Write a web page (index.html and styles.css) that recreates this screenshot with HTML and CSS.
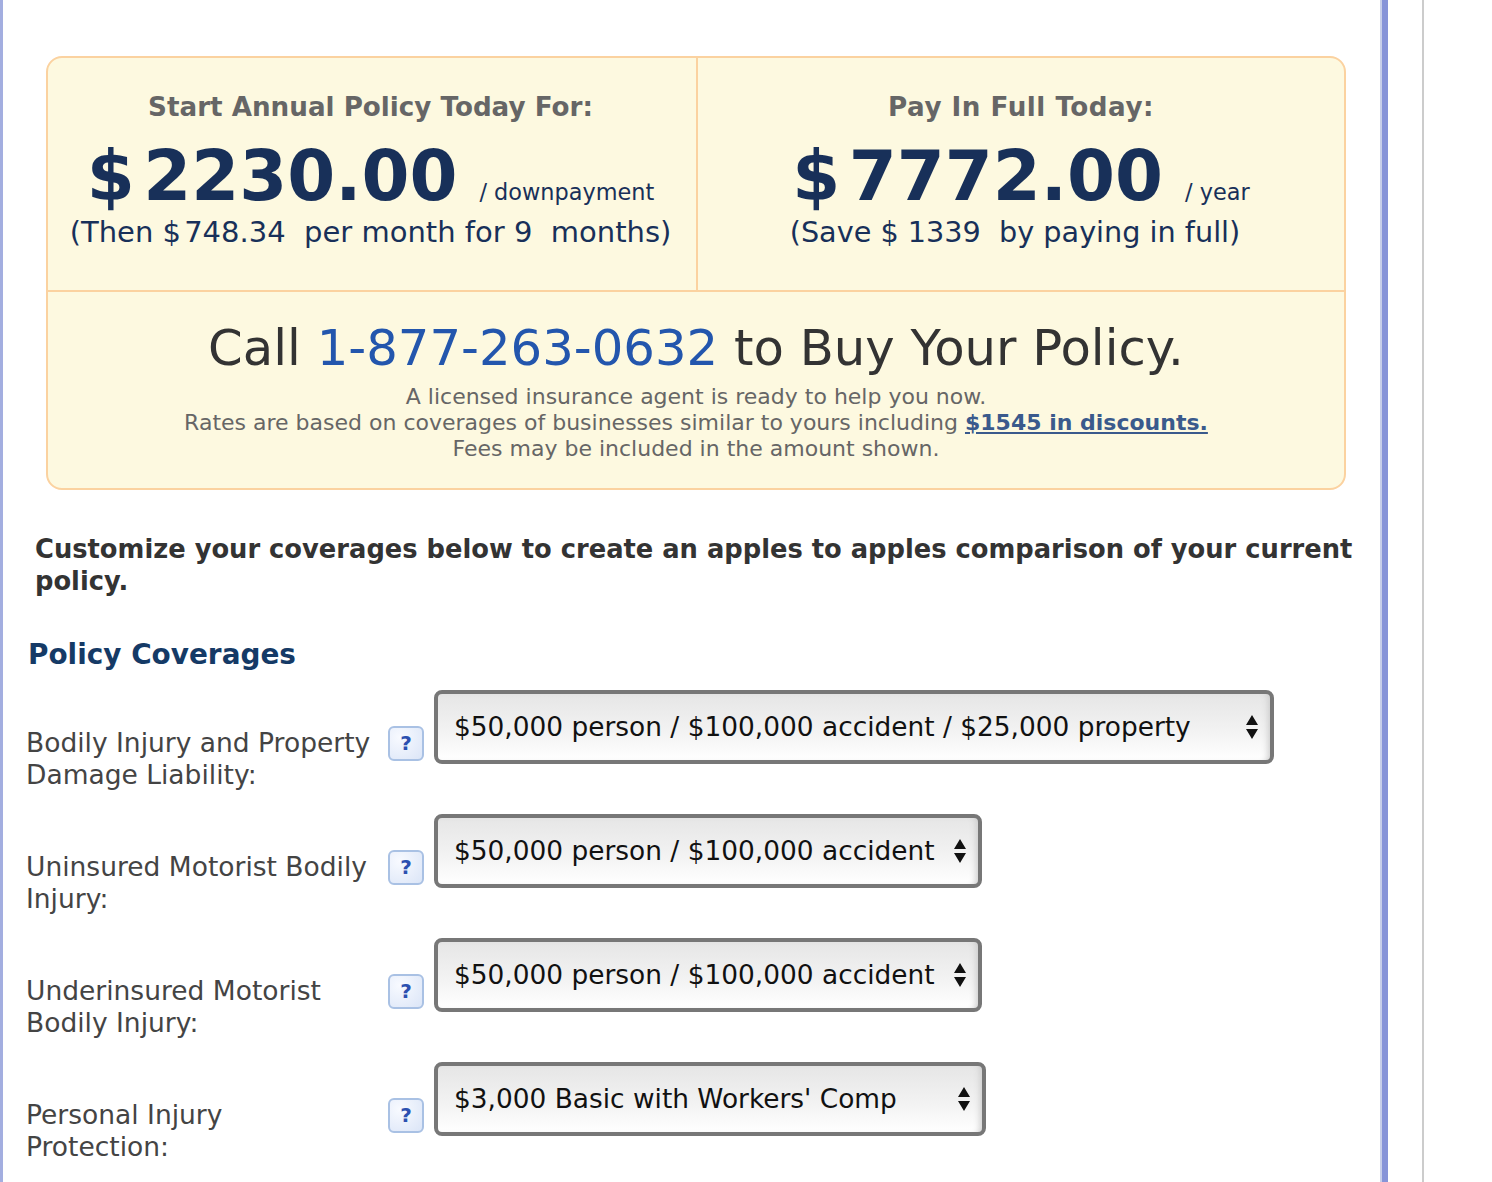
FILE: index.html
```html
<!DOCTYPE html>
<html lang="en">
<head>
    <meta charset="UTF-8">
    <title>Policy Quote</title>
    <link rel="stylesheet" href="styles.css">
</head>
<body>
    <div class="page">
        <div class="main">

            <!-- Quote box -->
            <div class="quote-box">
                <div class="price-row">
                    <div class="price-cell">
                        <h3 class="price-title">Start Annual Policy Today For:</h3>
                        <p class="price"><span class="amount">$<span class="thin"> </span>2230.00</span><span class="per">/ downpayment</span></p>
                        <p class="price-note">(Then $<span class="thin-note"> </span>748.34&nbsp; per month for 9&nbsp; months)</p>
                    </div>
                    <div class="price-cell">
                        <h3 class="price-title pay-title">Pay In Full Today:</h3>
                        <p class="price"><span class="amount">$<span class="thin"> </span>7772.00</span><span class="per">/ year</span></p>
                        <p class="price-note save-note">(Save $ 1339&nbsp; by paying in full)</p>
                    </div>
                </div>
                <div class="call-row">
                    <h2 class="call-title">Call <span class="phone">1-877-263-0632</span> to Buy Your Policy.</h2>
                    <p class="call-note">A licensed insurance agent is ready to help you now.<br>
                    Rates are based on coverages of businesses similar to yours including <a href="#" class="discount">$1545 in discounts.</a><br>
                    Fees may be included in the amount shown.</p>
                </div>
            </div>

            <p class="intro">Customize your coverages below to create an apples to apples comparison of your current policy.</p>

            <h2 class="section-title">Policy Coverages</h2>

            <!-- Coverage rows -->
            <div class="coverage">
                <label class="coverage-label">Bodily Injury and Property Damage Liability:</label>
                <span class="help">?</span>
                <div class="select select-wide">
                    <span>$50,000 person / $100,000 accident / $25,000 property</span>
                    <svg class="arrows" viewBox="0 0 12 24"><path d="M6 0l6 10H0zM0 14h12l-6 10z"/></svg>
                </div>
            </div>
            <div class="coverage">
                <label class="coverage-label">Uninsured Motorist Bodily Injury:</label>
                <span class="help">?</span>
                <div class="select select-mid">
                    <span>$50,000 person / $100,000 accident</span>
                    <svg class="arrows" viewBox="0 0 12 24"><path d="M6 0l6 10H0zM0 14h12l-6 10z"/></svg>
                </div>
            </div>
            <div class="coverage">
                <label class="coverage-label">Underinsured Motorist Bodily Injury:</label>
                <span class="help">?</span>
                <div class="select select-mid">
                    <span>$50,000 person / $100,000 accident</span>
                    <svg class="arrows" viewBox="0 0 12 24"><path d="M6 0l6 10H0zM0 14h12l-6 10z"/></svg>
                </div>
            </div>
            <div class="coverage">
                <label class="coverage-label">Personal Injury Protection:</label>
                <span class="help">?</span>
                <div class="select select-pip">
                    <span>$3,000 Basic with Workers' Comp</span>
                    <svg class="arrows" viewBox="0 0 12 24"><path d="M6 0l6 10H0zM0 14h12l-6 10z"/></svg>
                </div>
            </div>

        </div>
        <div class="side"></div>
    </div>
</body>
</html>
```

FILE: styles.css
```css
html, body {
    margin: 0;
    padding: 0;
    height: 100%;
    overflow: hidden;
    background-color: white;
}

body {
    font-family: "DejaVu Sans", Verdana, sans-serif;
    color: #333;
}

.page {
    display: flex;
    height: 1182px;
}

.main {
    box-sizing: border-box;
    width: 1388px;
    height: 1182px;
    overflow: hidden;
    border-left: 3px solid #a3aee0;
    border-right: 6px solid #8794d8;
    box-shadow: inset -2px 0 0 #c8cfe9;
    padding-top: 56px;
}

.side {
    box-sizing: border-box;
    width: 36px;
    height: 100%;
    border-right: 2px solid #ccc;
}

/* Quote box */
.quote-box {
    box-sizing: border-box;
    width: 1300px;
    height: 434px;
    margin-left: 43px;
    background-color: #fdf9e0;
    border: 2px solid #fbd2a0;
    border-radius: 16px;
}

.price-row {
    display: flex;
    height: 234px;
    box-sizing: border-box;
    border-bottom: 2px solid #fbd2a0;
}

.price-cell {
    flex: 1;
    text-align: center;
    padding-top: 31px;
    box-sizing: border-box;
}

.price-cell:first-child {
    flex: none;
    width: 648px;
    padding-right: 3px;
}

.price-cell + .price-cell {
    border-left: 2px solid #fbd2a0;
}

.price-title {
    margin: 0;
    font-size: 26.2px;
    line-height: 36px;
    font-weight: bold;
    color: #666;
}

.pay-title {
    letter-spacing: 0.5px;
}

.price {
    margin: 13px 0 0;
    height: 76px;
    color: #183059;
    white-space: nowrap;
}

.amount {
    font-size: 69px;
    line-height: 76px;
    font-weight: bold;
}

.thin {
    font-size: 24px;
}

.thin-note {
    font-size: 10px;
}

.per {
    font-size: 22.4px;
    margin-left: 22px;
}

.price-note {
    margin: 0;
    font-size: 29px;
    line-height: 36px;
    color: #183059;
    white-space: nowrap;
}

.save-note {
    font-size: 28.7px;
    padding-right: 12px;
}

.call-row {
    text-align: center;
}

.call-title {
    margin: 0;
    padding-top: 24px;
    font-size: 49.7px;
    line-height: 64px;
    font-weight: normal;
    color: #333;
}

.phone {
    color: #2356ad;
}

.call-note {
    margin: 4px 0 0;
    font-size: 22px;
    line-height: 26px;
    color: #666;
}

.discount {
    font-weight: bold;
    color: #3a5a8c;
}

/* Intro and heading */
.intro {
    margin: 43px 0 0 32px;
    font-size: 25.76px;
    line-height: 32px;
    font-weight: bold;
}

.section-title {
    margin: 38px 0 0 25px;
    font-size: 27.9px;
    line-height: 40px;
    font-weight: bold;
    color: #153a66;
}

/* Coverage rows */
.coverage {
    display: flex;
    align-items: flex-start;
    height: 124px;
    padding-left: 23px;
}

.section-title + .coverage {
    margin-top: 15px;
}

.coverage-label {
    width: 345px;
    margin-right: 17px;
    padding-top: 37px;
    font-size: 26.5px;
    line-height: 32px;
    color: #444;
}

.help {
    box-sizing: border-box;
    width: 36px;
    height: 35px;
    margin-top: 36px;
    margin-right: 10px;
    border: 2px solid #a9c1e4;
    border-radius: 6px;
    background: radial-gradient(circle at 30% 30%, #f8faff, #dbe5f7);
    color: #2c50b0;
    font-size: 20px;
    font-weight: bold;
    line-height: 31px;
    text-align: center;
}

.select {
    box-sizing: border-box;
    display: flex;
    align-items: center;
    justify-content: space-between;
    height: 74px;
    padding: 0 12px 2px 16px;
    border: 4px solid #777;
    border-radius: 8px;
    background: linear-gradient(#e6e6e6, #f2f2f2 55%, #ffffff);
    box-shadow: inset -6px 0 6px -4px #ccc;
    font-size: 26.4px;
    color: #111;
    white-space: nowrap;
}

.select-wide {
    width: 840px;
}

.select-mid {
    width: 548px;
}

.select-pip {
    width: 552px;
}

.arrows {
    width: 12px;
    height: 24px;
    fill: #111;
    flex: none;
    margin-top: 2px;
}
```
